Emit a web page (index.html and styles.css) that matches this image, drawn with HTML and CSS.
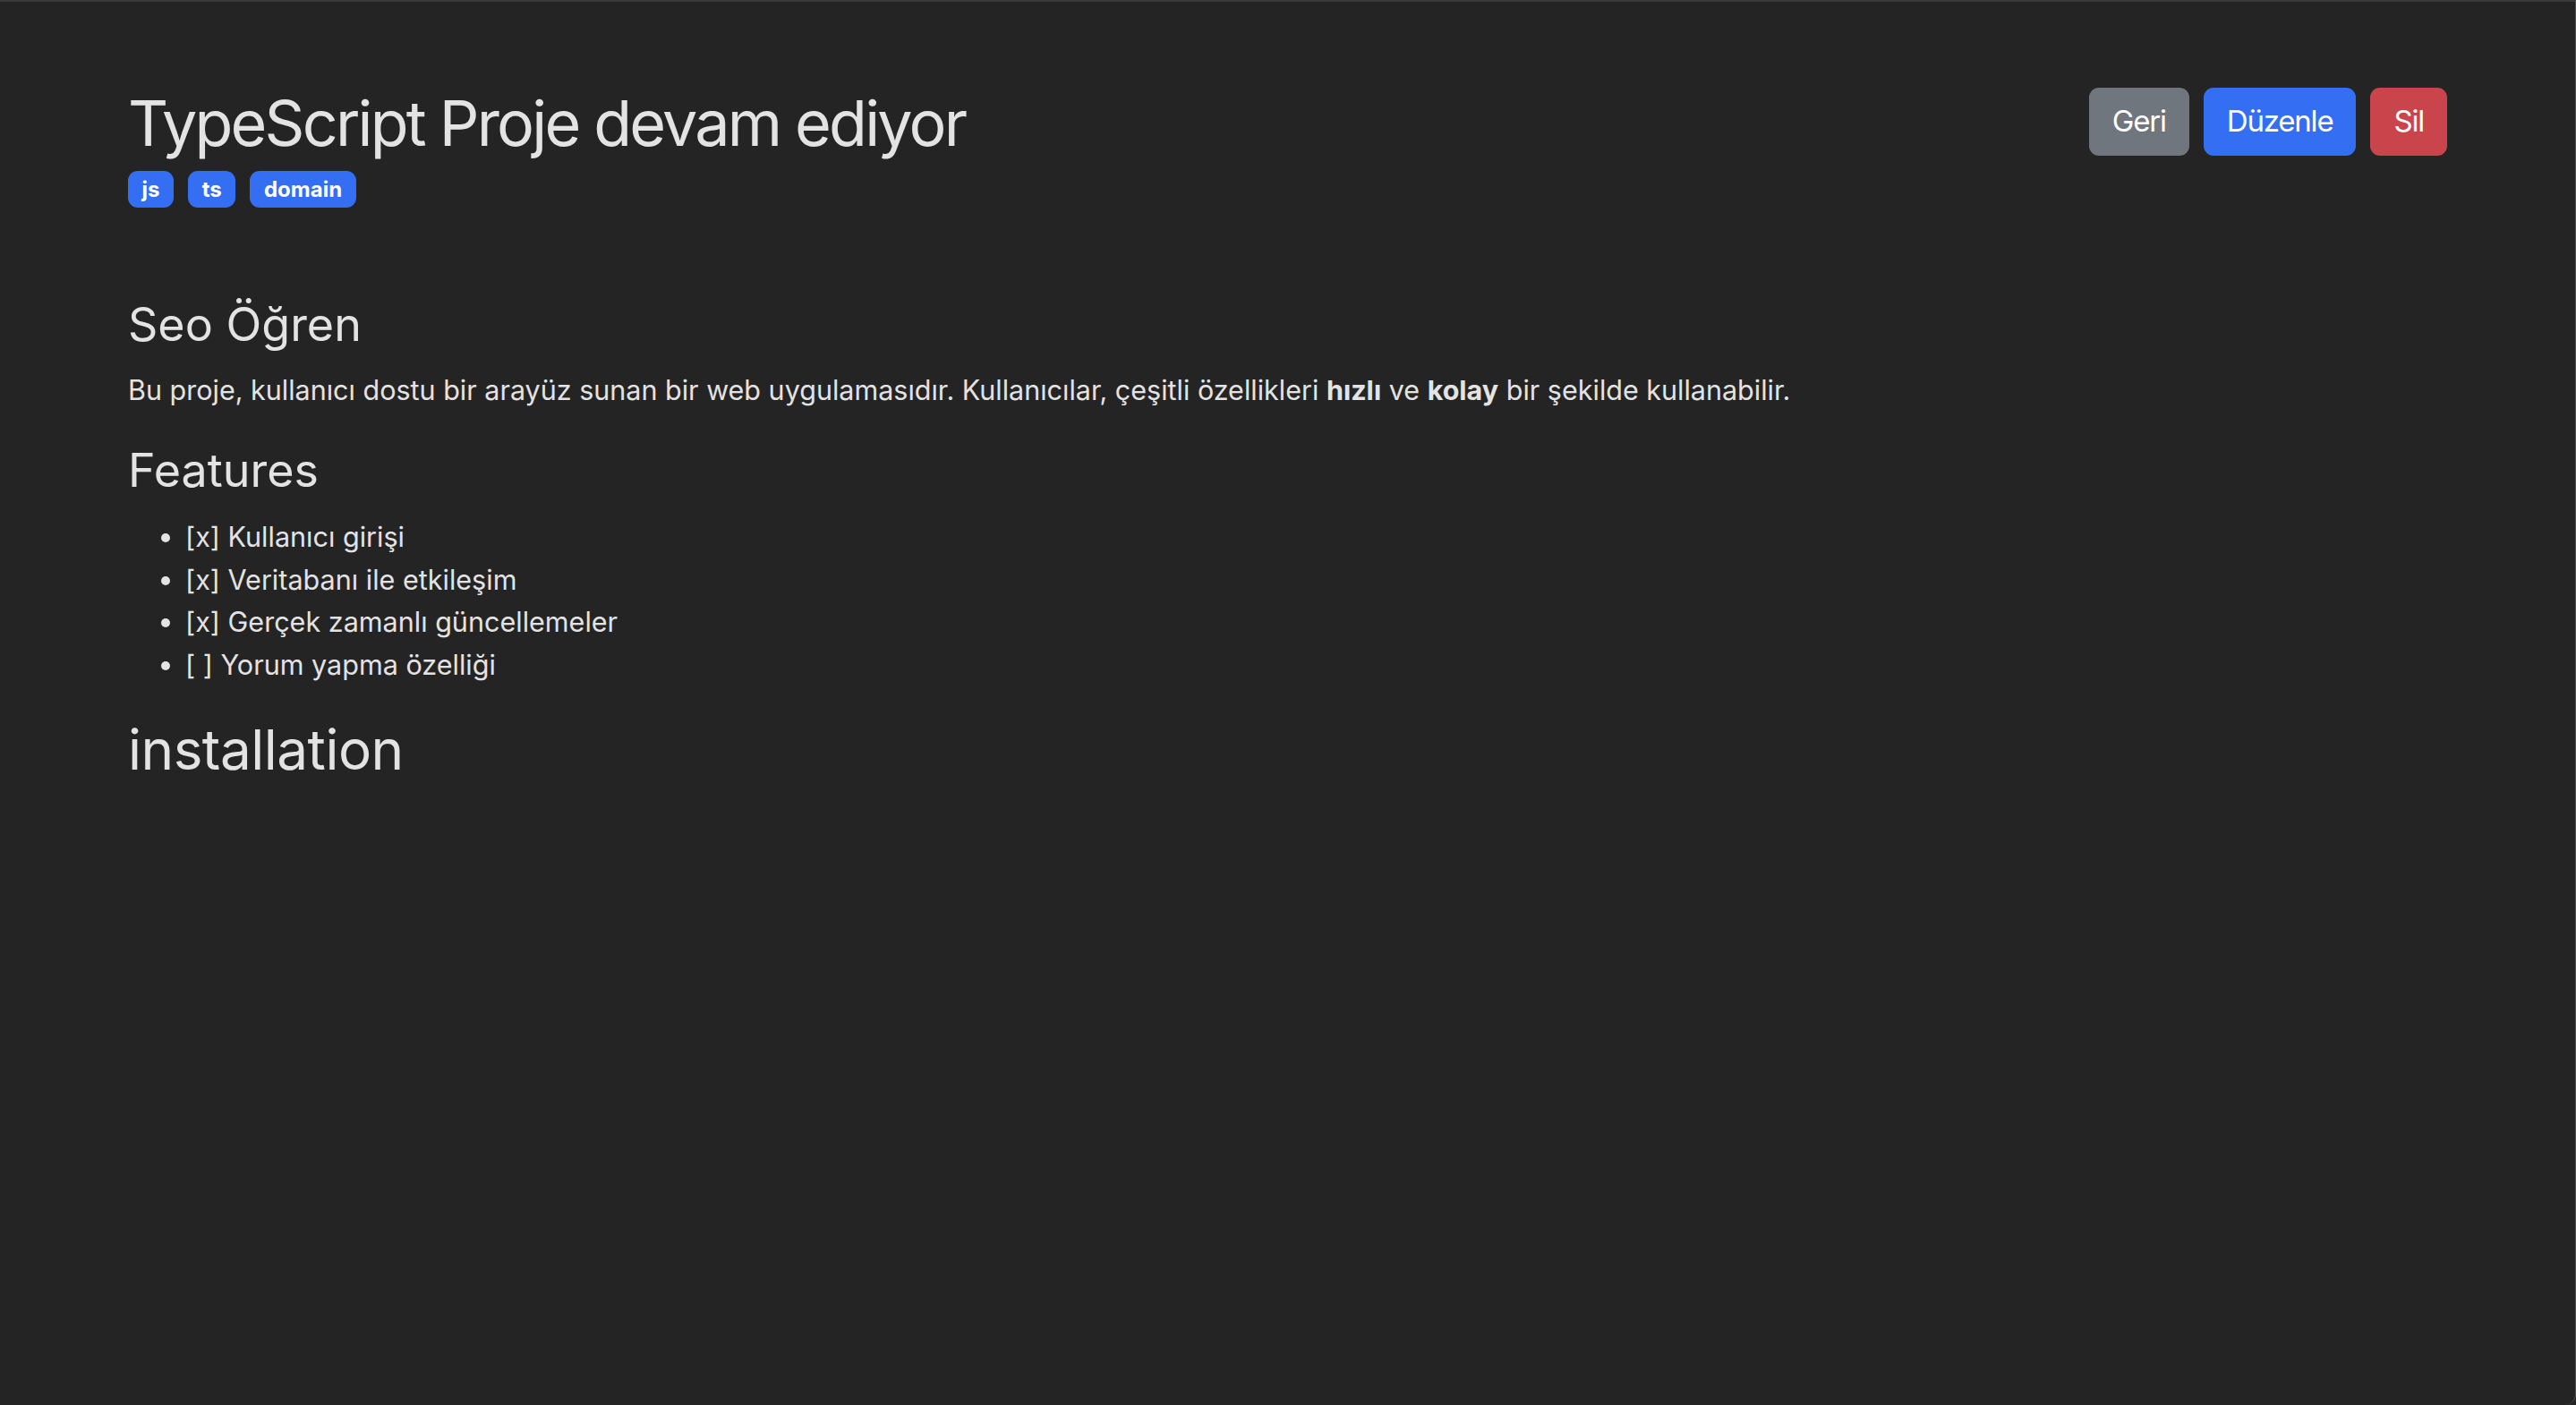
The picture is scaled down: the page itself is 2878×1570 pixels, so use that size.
FILE: index.html
```html
<!DOCTYPE html>
<html lang="tr">
<head>
<meta charset="utf-8">
<title>TypeScript Proje devam ediyor</title>
<link rel="stylesheet" href="styles.css">
</head>
<body>
<div class="window">
  <main class="container">
    <header class="header">
      <div class="title-block">
        <h1 class="title">TypeScript Proje devam ediyor</h1>
        <div class="tags">
          <span class="badge">js</span>
          <span class="badge">ts</span>
          <span class="badge">domain</span>
        </div>
      </div>
      <div class="actions">
        <button class="btn btn-secondary">Geri</button>
        <button class="btn btn-primary">Düzenle</button>
        <button class="btn btn-danger">Sil</button>
      </div>
    </header>
    <article class="content">
      <h3 class="h3">Seo Öğren</h3>
      <p class="para">Bu proje, kullanıcı dostu bir arayüz sunan bir web uygulamasıdır. Kullanıcılar, çeşitli özellikleri <strong>hızlı</strong> ve <strong>kolay</strong> bir şekilde kullanabilir.</p>
      <h3 class="h3">Features</h3>
      <ul class="list">
        <li>[x] Kullanıcı girişi</li>
        <li>[x] Veritabanı ile etkileşim</li>
        <li>[x] Gerçek zamanlı güncellemeler</li>
        <li>[ ] Yorum yapma özelliği</li>
      </ul>
      <h2 class="h2">installation</h2>
    </article>
  </main>
</div>
</body>
</html>
```

FILE: styles.css
```css
html, body {
  margin: 0;
  padding: 0;
  background: #242424;
}

.window {
  box-sizing: border-box;
  min-height: 100vh;
  background: #242424;
  border-top: 2px solid #3a3a3a;
  border-right: 1px solid #555555;
  border-bottom-right-radius: 12px;
  color: #e3e3e3;
  font-family: Inter, "Noto Sans", "DejaVu Sans", sans-serif;
}

.container {
  padding: 93.5px 143px 0 143px;
}

.header {
  display: flex;
  justify-content: space-between;
  align-items: flex-start;
}

.title {
  margin: 0;
  font-size: 70px;
  line-height: 1.2;
  font-weight: 400;
  letter-spacing: -2.8px;
  color: #e3e3e3;
}

.tags {
  display: flex;
  gap: 16px;
  margin-top: 11.5px;
}

.badge {
  display: inline-block;
  background: #346ff3;
  color: #ffffff;
  font-size: 24px;
  font-weight: 700;
  line-height: 1;
  padding: 8.5px 15.6px;
  border-radius: 11px;
}

.actions {
  display: flex;
  gap: 16px;
  margin-top: 2.5px;
}

.btn {
  font-family: Inter, "Noto Sans", sans-serif;
  font-size: 33px;
  line-height: 1.5;
  letter-spacing: -1.2px;
  padding: 13px 26px;
  border: none;
  border-radius: 11px;
  color: #ffffff;
}

.btn-secondary { background: #6f767d; }
.btn-primary { background: #346ff3; }
.btn-danger { background: #ca454b; }

.content {
  margin-top: 100px;
}

.h3 {
  margin: 0 0 18.5px 0;
  font-size: 52px;
  line-height: 1.2;
  font-weight: 400;
}

.para {
  margin: 0 0 37px 0;
  font-size: 30.5px;
  line-height: 1.48;
}

.para strong {
  font-weight: 700;
}

.list {
  margin: 0 0 34px 0;
  padding-left: 64px;
  font-size: 30.55px;
  line-height: 47.7px;
}

.h2 {
  margin: 0;
  font-size: 62px;
  line-height: 1.2;
  font-weight: 400;
  letter-spacing: -0.5px;
}
```
